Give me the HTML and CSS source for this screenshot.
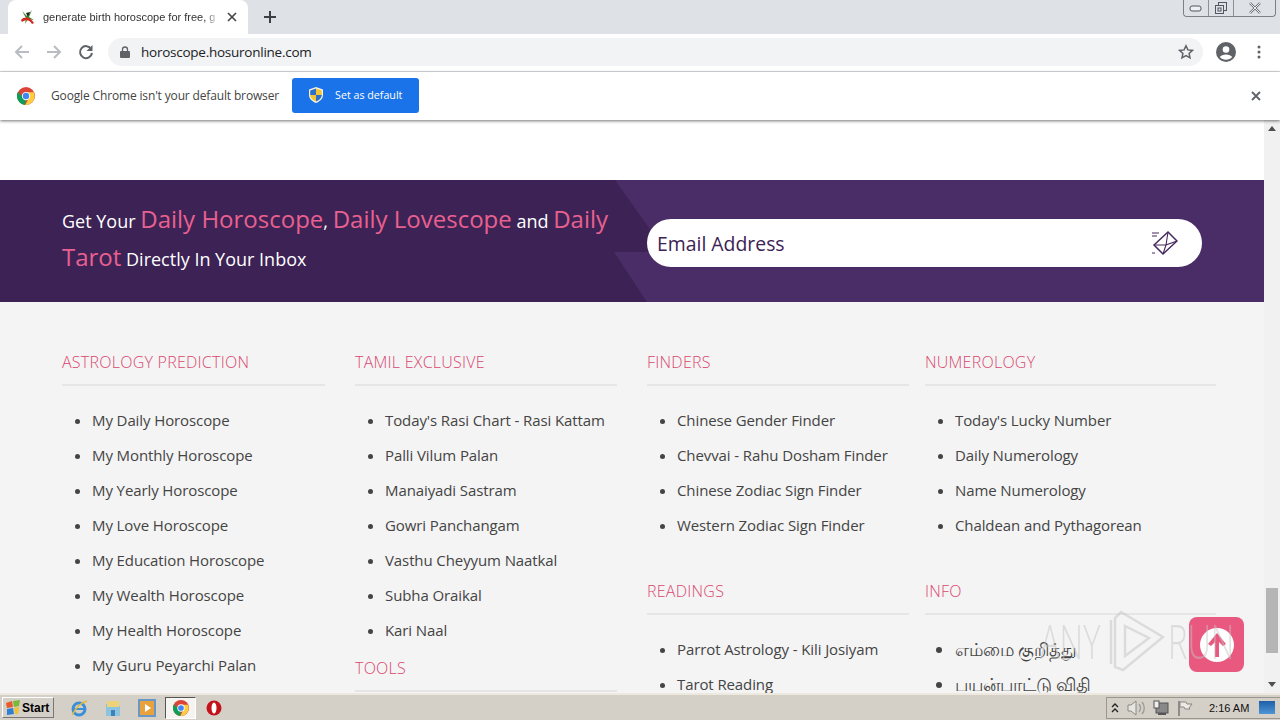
FILE: index.html
```html
<!DOCTYPE html>
<html lang="en">
<head>
<meta charset="utf-8">
<title>horoscope.hosuronline.com</title>
<link rel="stylesheet" href="styles.css">
</head>
<body>
<div class="tabstrip">
  <div class="tab">
    <svg class="favicon" viewBox="0 0 16 16" width="16" height="16"><path d="M2 2l5 5 5-6-3 7 5 3-6-1-3 5 1-6z" fill="#3c8d2f"/><path d="M1 11c4-4 9-3 13 3l-2 1c-2-4-6-5-10-2z" fill="#d8261c"/><path d="M6 4l2 4 2-5z" fill="#222"/></svg>
    <span class="tab-title">generate birth horoscope for free, g</span>
    <svg class="tab-close" viewBox="0 0 10 10" width="10" height="10"><path d="M1 1l8 8M9 1l-8 8" stroke="#444" stroke-width="1.6"/></svg>
  </div>
  <svg class="newtab" viewBox="0 0 12 12" width="12" height="12"><path d="M6 0v12M0 6h12" stroke="#3c4043" stroke-width="2"/></svg>
  <div class="winctl">
    <div class="winbtn wb-min"><svg viewBox="0 0 14 8" width="14" height="8"><rect x="1" y="2" width="11" height="5" rx="2" fill="#eef0f3" stroke="#4f5760"/></svg></div>
    <div class="winbtn wb-max"><svg viewBox="0 0 14 14" width="14" height="14"><rect x="4.500" y="1.500" width="8" height="8" fill="none" stroke="#4f5760"/><rect x="1.500" y="4.500" width="8" height="8" fill="#dee1e6" stroke="#4f5760"/><rect x="4" y="7" width="3" height="3" fill="none" stroke="#4f5760"/></svg></div>
    <div class="winbtn wb-close"><svg viewBox="0 0 14 12" width="14" height="12"><path d="M2 1l10 10M12 1L2 11" stroke="#6a7178" stroke-width="2.400"/><path d="M2 1l10 10M12 1L2 11" stroke="#eef0f3" stroke-width="1"/></svg></div>
  </div>
</div>

<div class="toolbar">
  <svg class="nav" viewBox="0 0 16 16" width="16" height="16"><path d="M15 8H2M8 2L2 8l6 6" fill="none" stroke="#b9bcc0" stroke-width="2"/></svg>
  <svg class="nav" viewBox="0 0 16 16" width="16" height="16"><path d="M1 8h13M8 2l6 6-6 6" fill="none" stroke="#b9bcc0" stroke-width="2"/></svg>
  <svg class="nav" viewBox="0 0 16 16" width="16" height="16"><path d="M13.200 5A6 6 0 1 0 14 9" fill="none" stroke="#5f6368" stroke-width="2"/><path d="M14.500 1v6h-6z" fill="#5f6368"/></svg>
  <div class="omnibox">
    <svg class="lock" viewBox="0 0 10 12" width="10" height="12"><path d="M2.500 5V3.500a2.500 2.500 0 0 1 5 0V5" fill="none" stroke="#5f6368" stroke-width="1.300"/><rect y="5" width="10" height="7" rx="1" fill="#5f6368"/></svg>
    <span class="url">horoscope.hosuronline.com</span>
    <svg class="star" viewBox="0 0 16 16" width="16" height="16"><path d="M8 1.800l1.900 4.100 4.500.5-3.300 3 .9 4.400L8 11.600l-4 2.200.9-4.400-3.300-3 4.500-.5z" fill="none" stroke="#5f6368" stroke-width="1.500"/></svg>
  </div>
  <svg class="avatar" viewBox="0 0 20 20" width="20" height="20"><circle cx="10" cy="10" r="10" fill="#5f6368"/><circle cx="10" cy="7.500" r="3.300" fill="#fff"/><path d="M3.800 15c2-3.500 10.400-3.500 12.400 0-3 3.500-9.400 3.500-12.400 0z" fill="#fff"/></svg>
  <svg class="kebab" viewBox="0 0 4 14" width="4" height="14"><circle cx="2" cy="2" r="1.500" fill="#5f6368"/><circle cx="2" cy="7" r="1.500" fill="#5f6368"/><circle cx="2" cy="12" r="1.500" fill="#5f6368"/></svg>
</div>

<div class="infobar">
  <svg class="chrome-logo" viewBox="0 0 48 48" width="18" height="18"><circle cx="24" cy="24" r="24" fill="#db4437"/><path d="M3.200 36L14 17.500 24 24l-2 24A24 24 0 0 1 3.200 36zM3.200 36A24 24 0 0 1 3.200 12L13 29z" fill="#0f9d58"/><path d="M24 14h20.800A24 24 0 0 1 22 48l12-24z" fill="#ffcd40"/><circle cx="24" cy="24" r="11" fill="#fff"/><circle cx="24" cy="24" r="8.500" fill="#4285f4"/></svg>
  <span class="info-text">Google Chrome isn't your default browser</span>
  <button class="default-btn">
    <svg viewBox="0 0 14 16" width="14" height="16"><path d="M7 0l7 2.500V8c0 4-3.500 6.500-7 8-3.500-1.500-7-4-7-8V2.500z" fill="#f7f3df"/><path d="M7 1.500L1.200 3.500V8H7z" fill="#2f6fc8"/><path d="M7 1.500l5.800 2V8H7z" fill="#f4c534"/><path d="M1.200 8H7v6.500C4 13.200 1.200 11 1.200 8z" fill="#f4c534"/><path d="M12.800 8H7v6.500c3-1.300 5.800-3.500 5.800-6.500z" fill="#2f6fc8"/></svg>
    <span>Set as default</span>
  </button>
  <svg class="info-close" viewBox="0 0 10 10" width="10" height="10"><path d="M1 1l8 8M9 1l-8 8" stroke="#5f6368" stroke-width="1.800"/></svg>
</div>

<div class="viewport">
  <main class="page">
    <div class="page-top"></div>
    <section class="banner">
      <div class="banner-shape"></div>
      <p class="banner-text">Get Your <em>Daily Horoscope</em>, <em>Daily Lovescope</em> and <em>Daily Tarot</em> Directly In Your Inbox</p>
      <div class="email">
        <span>Email Address</span>
        <svg viewBox="0 0 26 26" width="26" height="26"><path d="M2 15L16 2l9 9-14 13z" fill="none" stroke="#45295f" stroke-width="1.500"/><path d="M2 15l12 0 2-13M11 24l3-9 11-4" fill="none" stroke="#45295f" stroke-width="1.100"/><path d="M0 3h7M0 6h5M0 23h3" stroke="#45295f" stroke-width="1.200"/></svg>
      </div>
    </section>
    <section class="links">
      <div class="col">
        <h3>ASTROLOGY PREDICTION</h3>
        <ul>
          <li>My Daily Horoscope</li><li>My Monthly Horoscope</li><li>My Yearly Horoscope</li><li>My Love Horoscope</li><li>My Education Horoscope</li><li>My Wealth Horoscope</li><li>My Health Horoscope</li><li>My Guru Peyarchi Palan</li>
        </ul>
      </div>
      <div class="col">
        <h3>TAMIL EXCLUSIVE</h3>
        <ul>
          <li>Today's Rasi Chart - Rasi Kattam</li><li>Palli Vilum Palan</li><li>Manaiyadi Sastram</li><li>Gowri Panchangam</li><li>Vasthu Cheyyum Naatkal</li><li>Subha Oraikal</li><li>Kari Naal</li>
        </ul>
        <h3 class="tools">TOOLS</h3>
      </div>
      <div class="col">
        <h3>FINDERS</h3>
        <ul class="group">
          <li>Chinese Gender Finder</li><li>Chevvai - Rahu Dosham Finder</li><li>Chinese Zodiac Sign Finder</li><li>Western Zodiac Sign Finder</li>
        </ul>
        <h3>READINGS</h3>
        <ul>
          <li>Parrot Astrology - Kili Josiyam</li><li>Tarot Reading</li>
        </ul>
      </div>
      <div class="col">
        <h3>NUMEROLOGY</h3>
        <ul class="group">
          <li>Today's Lucky Number</li><li>Daily Numerology</li><li>Name Numerology</li><li>Chaldean and Pythagorean</li>
        </ul>
        <h3>INFO</h3>
        <ul>
          <li class="ta">எம்மை குறித்து</li><li class="ta">பயன்பாட்டு விதி</li>
        </ul>
      </div>
    </section>
  </main>
  <div class="scrollbar">
    <span class="arrow up"></span>
    <span class="thumb"></span>
    <span class="arrow down"></span>
  </div>
  <div class="to-top">
    <svg viewBox="0 0 34 34" width="34" height="34"><circle cx="17" cy="17" r="17" fill="#fff"/><path d="M17 5L8 16l3 2 6-6 6 6 3-2z" fill="#e8587f"/><rect x="15" y="11" width="4" height="18" fill="#e8587f"/></svg>
  </div>
  <div class="watermark">
    <span class="wm-text">ANY</span>
    <svg viewBox="0 0 60 62" width="60" height="62"><path d="M16 2l42 25-40 33-8-3V8z" fill="none" stroke="#c4c4c4" stroke-width="2.500"/><path d="M6 10v44M20 16l24 12-24 18z" fill="none" stroke="#c4c4c4" stroke-width="2.500"/></svg>
    <span class="wm-text">RUN</span>
  </div>
</div>

<footer class="taskbar">
  <button class="start">
    <svg viewBox="0 0 16 16" width="16" height="16"><path d="M1 3l6-2 1 6-6 1z" fill="#e8592b"/><path d="M8 1l7-1-1 6-5 1z" fill="#7cb83a"/><path d="M2 9l6-1 1 6-7 1z" fill="#2f7fd6"/><path d="M9 8l5-1-1 7-3 0z" fill="#f3c02e"/></svg>
    <span>Start</span>
  </button>
  <div class="tasks">
    <svg viewBox="0 0 18 18" width="18" height="18"><circle cx="9" cy="10" r="6" fill="none" stroke="#3b8fd8" stroke-width="3"/><path d="M3 10h12" stroke="#3b8fd8" stroke-width="2"/><path d="M2 16C6 9 12 3 17 2" fill="none" stroke="#e2b93b" stroke-width="1.500"/></svg>
    <svg viewBox="0 0 18 18" width="18" height="18"><path d="M2 5h5l1 2h8v10H2z" fill="#8cc4e0"/><rect x="3" y="2" width="12" height="6" fill="#eed27a"/><rect x="7" y="11" width="4" height="6" fill="#3d82b6"/></svg>
    <svg viewBox="0 0 18 18" width="18" height="18"><rect x="1" y="1" width="16" height="16" fill="#e9a13b" stroke="#6b97c6" stroke-width="2"/><path d="M7 5l6 4-6 4z" fill="#fff"/></svg>
    <div class="task-active">
      <svg viewBox="0 0 48 48" width="16" height="16"><circle cx="24" cy="24" r="24" fill="#db4437"/><path d="M3.200 36L14 17.500 24 24l-2 24A24 24 0 0 1 3.200 36zM3.200 36A24 24 0 0 1 3.200 12L13 29z" fill="#0f9d58"/><path d="M24 14h20.800A24 24 0 0 1 22 48l12-24z" fill="#ffcd40"/><circle cx="24" cy="24" r="11" fill="#fff"/><circle cx="24" cy="24" r="8.500" fill="#4285f4"/></svg>
    </div>
    <svg class="opera" viewBox="0 0 16 16" width="16" height="16"><circle cx="8" cy="8" r="7.500" fill="#c4121a"/><ellipse cx="8" cy="8" rx="2.500" ry="5.500" fill="#fff"/></svg>
  </div>
  <div class="tray">
    <svg viewBox="0 0 8 10" width="8" height="10"><path d="M1 4l3-3 3 3M1 9l3-3 3 3" fill="none" stroke="#222" stroke-width="1.300"/></svg>
    <svg viewBox="0 0 18 16" width="18" height="16"><path d="M1 5h3l5-4v14l-5-4H1z" fill="#e8e6e0" stroke="#888"/><path d="M12 4c2 2 2 6 0 8M15 2c3 3 3 9 0 12" fill="none" stroke="#999" stroke-width="1.300"/></svg>
    <svg viewBox="0 0 16 16" width="16" height="16"><rect x="3" y="3" width="12" height="10" fill="#888" stroke="#555"/><rect x="1" y="1" width="5" height="7" fill="#eee" stroke="#555"/><rect x="5" y="13" width="8" height="2" fill="#555"/></svg>
    <svg viewBox="0 0 16 16" width="16" height="16"><path d="M2 1v15" stroke="#777" stroke-width="1.500"/><path d="M3 2h6l1 2h5l-3 4 1 1H8L7 7H3z" fill="#eeeae2" stroke="#888"/></svg>
    <span class="clock">2:16 AM</span>
    <span class="show-desktop"></span>
  </div>
</footer>
</body>
</html>
```
FILE: styles.css
```css
* { box-sizing: border-box; }
html, body { margin: 0; height: 720px; overflow: hidden; }
body { width: 1280px; display: flex; flex-direction: column; font-family: "Open Sans", "Liberation Sans", sans-serif; background: #fff; color: #333; }
.tabstrip { height: 34px; flex: none; background: #dee1e6; display: flex; align-items: flex-end; padding-left: 8px; }
.tab { width: 240px; height: 34px; background: #fff; border-radius: 8px 8px 0 0; display: flex; align-items: center; padding: 0 11px 0 12px; color: #333; }
.favicon { flex: none; margin-right: 7px; }
.tab-title { flex: 1; overflow: hidden; white-space: nowrap; font-family: "Liberation Sans", sans-serif; font-size: 11px; -webkit-mask-image: linear-gradient(90deg, #000 92%, transparent); mask-image: linear-gradient(90deg, #000 92%, transparent); }
.tab-close { flex: none; margin-left: 8px; }
.newtab { align-self: center; margin-left: 16px; }
.winctl { margin-left: auto; align-self: flex-start; display: flex; height: 17px; margin-right: 4px; border: 1px solid #7b8087; border-top: 0; border-radius: 0 0 4px 4px; }
.winbtn { display: flex; align-items: center; justify-content: center; height: 16px; background: #dee1e6; }
.wb-min { width: 25px; border-right: 1px solid #8d9299; border-radius: 0 0 0 4px; }
.wb-max { width: 25px; border-right: 1px solid #8d9299; }
.wb-close { width: 41px; border-radius: 0 0 4px 0; }
.toolbar { height: 38px; flex: none; background: #fff; border-bottom: 1px solid #dadce0; display: flex; align-items: center; padding: 0 19px 2px 14px; }
.nav { margin-right: 16px; flex: none; }
.omnibox { flex: 1; height: 28px; margin: 0 13px 0 -2px; border-radius: 14px; background: #f1f3f4; display: flex; align-items: center; padding: 0 9px 0 12px; }
.lock { flex: none; margin-right: 11px; }
.url { flex: 1; font-size: 13.500px; color: #202124; letter-spacing: -.25px; }
.avatar { margin-right: 21px; flex: none; }
.kebab { flex: none; }
.infobar { height: 48px; flex: none; background: #fff; display: flex; align-items: center; padding: 0 19px 1px 17px; box-shadow: 0 1px 3px rgba(0,0,0,.55); position: relative; z-index: 2; }
.chrome-logo { flex: none; margin-right: 16px; }
.info-text { font-size: 12px; color: #444; letter-spacing: -.15px; margin-right: 13px; white-space: nowrap; }
.default-btn { width: 127px; height: 35px; border: 0; border-radius: 3px; background: #1a73e8; color: #fff; font: 10.700px "Open Sans", sans-serif; display: flex; align-items: center; padding: 0 0 2px 17px; gap: 12px; }
.info-close { margin-left: auto; }
.viewport { flex: 1; min-height: 0; display: flex; position: relative; overflow: hidden; background: #f4f4f4; }
.page { flex: 1; min-width: 0; overflow: hidden; }
.page-top { height: 60px; background: #fff; }
.banner { height: 122px; background: #3c2255; display: flex; align-items: center; padding: 0 62px; position: relative; overflow: hidden; }
.banner-shape { position: absolute; left: 614px; top: 0; right: 0; bottom: 0; background: #4a2d66; clip-path: polygon(1px 0, 100% 0, 100% 100%, 33px 100%, 0 72px, 52px 72px); }
.banner-text { width: 560px; margin: -3px 0 0; position: relative; font-size: 18px; line-height: 38px; color: #fff; font-weight: 400; }
.banner-text em { font-style: normal; font-size: 24px; line-height: 1; font-weight: 400; color: #e8608f; }
.email { position: absolute; left: 647px; top: 39px; width: 555px; height: 48px; border-radius: 24px; background: #fff; display: flex; align-items: center; justify-content: space-between; padding: 0 24px 0 10px; font-size: 19.400px; color: #3c2255; }
.links { display: grid; grid-template-columns: 293px 292px 278px 291px; padding: 0 0 0 62px; }
.col { padding-top: 48px; }
.col:nth-child(1), .col:nth-child(2) { padding-right: 30px; }
.col:nth-child(3) { padding-right: 16px; }
.col h3 { margin: 0 0 17px; height: 36px; padding: 0; border-bottom: 2px solid #e6e6e6; font-size: 16px; line-height: 24px; letter-spacing: .25px; font-weight: 300; color: #d9476f; }
.col ul { margin: 0; padding: 0 0 0 30px; list-style: disc; font-size: 15px; font-weight: 400; color: #444; letter-spacing: -.1px; }
.col li { height: 35px; line-height: 35px; white-space: nowrap; }
.col li.ta { font-size: 17.500px; }
.col ul.group { margin-bottom: 36px; }
.col h3.tools { margin-top: 8px; }
.scrollbar { width: 16px; flex: none; background: #f1f1f1; display: flex; flex-direction: column; align-items: center; position: relative; }
.arrow { width: 0; height: 0; border-left: 4px solid transparent; border-right: 4px solid transparent; margin: 6px 0; }
.arrow.up { border-bottom: 5px solid #505050; }
.arrow.down { border-top: 5px solid #505050; margin-top: auto; }
.thumb { position: absolute; top: 468px; left: 2px; width: 12px; height: 65px; background: #b5b5b5; }
.to-top { position: absolute; left: 1189px; top: 497px; width: 55px; height: 55px; border-radius: 8px; background: #e8587f; display: flex; align-items: center; justify-content: center; }
.watermark { position: absolute; left: 1040px; top: 490px; height: 62px; display: flex; align-items: center; gap: 3px; color: #c4c4c4; opacity: .5; pointer-events: none; }
.wm-text { display: block; width: 62px; font: 300 48px/1 "Open Sans", sans-serif; white-space: nowrap; transform: scaleX(.68); transform-origin: left center; }
.taskbar { height: 27px; flex: none; background: #d4d0c8; border-top: 2px solid #eee9df; display: flex; align-items: center; padding: 0 0 0 2px; position: relative; z-index: 3; }
.start { width: 52px; height: 21px; padding: 0 0 0 2px; border: 1px solid #777; border-top-color: #fff; border-left-color: #fff; background: #d4d0c8; display: flex; align-items: center; gap: 1px; font: 700 12px "Liberation Sans", sans-serif; color: #000; flex: none; }
.tasks { display: flex; align-items: center; gap: 16px; margin-left: 16px; }
.task-active { width: 31px; height: 22px; margin: 0 -6px 0 -7px; background: #f6f4f0; border: 1px solid #555; border-right-color: #fff; border-bottom-color: #fff; display: flex; align-items: center; justify-content: center; }
.tray { margin-left: auto; height: 22px; width: 174px; border: 1px solid #9b978f; border-right: 0; display: flex; align-items: center; padding-left: 4px; gap: 8px; flex: none; }
.tray svg { flex: none; }
.clock { font: 11px "Liberation Sans", sans-serif; color: #111; margin-left: 8px; white-space: nowrap; }
.show-desktop { width: 16px; height: 13px; margin-left: 2px; flex: none; background: linear-gradient(180deg, #1f5fa8, #4d95d4); }
```
